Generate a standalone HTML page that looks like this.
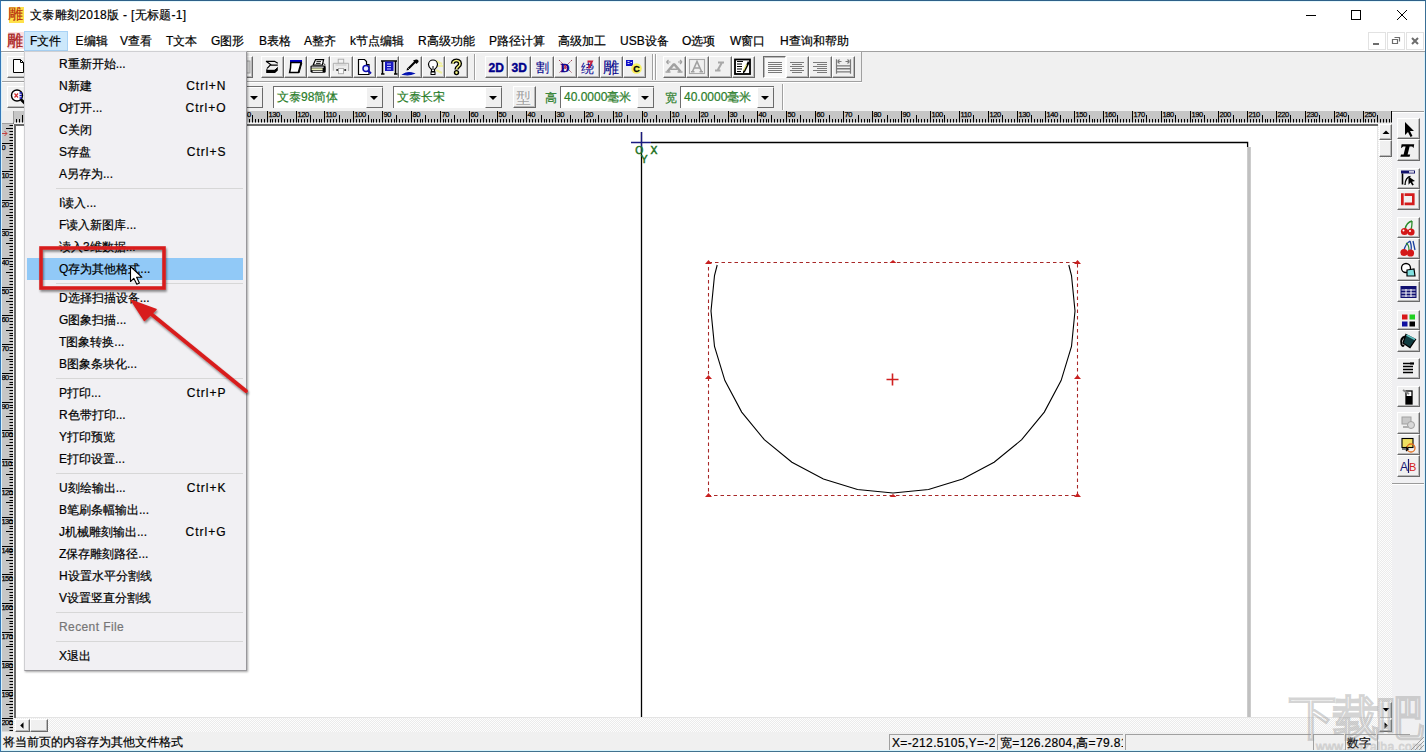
<!DOCTYPE html>
<html><head><meta charset="utf-8">
<style>

*{box-sizing:border-box}
html,body{margin:0;padding:0}
body{width:1426px;height:752px;overflow:hidden;position:relative;background:#f0f0f0;font-family:"Liberation Sans",sans-serif;font-size:12px;color:#000;-webkit-text-stroke-width:0.2px}
.a{position:absolute}
svg{position:absolute;overflow:visible}


.sb{position:absolute;background:#f0f0f0;border-top:1px solid #fff;border-left:1px solid #fff;border-right:1px solid #6a6a6a;border-bottom:1px solid #6a6a6a;box-shadow:inset -1px -1px 0 #b9b9b9}
.trk{position:absolute;background-color:#fdfdfd;background-image:linear-gradient(45deg,#ebebeb 25%,transparent 25%,transparent 75%,#ebebeb 75%),linear-gradient(45deg,#ebebeb 25%,transparent 25%,transparent 75%,#ebebeb 75%);background-size:2px 2px;background-position:0 0,1px 1px}


.tb{position:absolute;width:23px;height:22px;background:#f0f0f0;border-top:1px solid #fff;border-left:1px solid #fff;border-right:1px solid #6a6a6a;border-bottom:1px solid #6a6a6a;box-shadow:inset -1px -1px 0 #b9b9b9}
.tb svg{left:-1px;top:-1px}
.vsep{position:absolute;width:2px;border-left:1px solid #a0a0a0;border-right:1px solid #fff}
.cb{position:absolute;height:22px;background:#fff;border-top:1px solid #6e6e6e;border-left:1px solid #6e6e6e;white-space:nowrap;overflow:hidden}
.dd{position:absolute;right:0;top:0;width:17px;height:21px;background:#f0f0f0;border-top:1px solid #fff;border-left:1px solid #fff;border-right:1px solid #6a6a6a;border-bottom:1px solid #6a6a6a}
.dd:after{content:"";position:absolute;left:3px;top:8px;border-left:4px solid transparent;border-right:4px solid transparent;border-top:4px solid #000}
.gt{position:absolute;color:#2a7d2a;font-size:12px;line-height:16px;white-space:nowrap}


#menu{position:absolute;left:24px;top:51px;width:223px;height:620px;background:#f1f0f3;border:1px solid #cfcfd2;border-right-color:#98979b;border-bottom-color:#98979b;box-shadow:1px 1px 2px rgba(0,0,0,.35)}
.it{position:absolute;left:34px;height:22px;line-height:22px;white-space:nowrap}
.sc{position:absolute;right:19.5px;height:22px;line-height:22px;white-space:nowrap;letter-spacing:1px}
.sep{position:absolute;left:31px;width:187px;height:1px;background:#d7d7d7}
.hl{position:absolute;left:2px;width:216px;height:22px;background:#91c9f7}

</style></head><body>

<div class="a" style="left:0;top:0;width:1426px;height:31px;background:#fff"></div>
<div class="a" style="left:0;top:31px;width:1426px;height:20px;background:#fff"></div>
<div class="a" style="left:0;top:51px;width:1426px;height:1px;background:#a0a0a0"></div>


<div class="a" style="left:9px;top:7px;width:15px;height:16px;background:#ffe14a"></div>
<div class="a" style="left:8px;top:5px;font-size:15px;line-height:18px;color:#b83010">雕</div>
<div class="a" style="left:30px;top:7px;font-size:12px;line-height:16px;color:#000;letter-spacing:0.3px">文泰雕刻2018版 - [无标题-1]</div>
<svg style="left:0;top:0" width="1426" height="52">
 <line x1="1306" y1="15.5" x2="1316" y2="15.5" stroke="#000" stroke-width="1"/>
 <rect x="1351.5" y="10.5" width="9" height="9" fill="none" stroke="#000" stroke-width="1"/>
 <path d="M1397 10 L1407 20 M1407 10 L1397 20" stroke="#000" stroke-width="1"/>
 <rect x="1368.5" y="32.5" width="17" height="17" fill="none" stroke="#e2e2e2"/>
 <rect x="1387.5" y="32.5" width="17" height="17" fill="none" stroke="#e2e2e2"/>
 <rect x="1406.5" y="32.5" width="17" height="17" fill="none" stroke="#e2e2e2"/>
 <rect x="1373" y="43" width="6" height="2" fill="#6d6d6d"/>
 <path d="M1392.5 39.5h5v4h-5z M1394.5 37.5h5v4" fill="none" stroke="#6d6d6d" stroke-width="1.2"/>
 <path d="M1412 38 L1418 44 M1418 38 L1412 44" stroke="#6d6d6d" stroke-width="2"/>
</svg>
<div class="a" style="left:8px;top:32px;width:16px;height:17px;background:#fbe0e0"></div><div class="a" style="left:7px;top:32px;font-size:16px;line-height:18px;color:#c01c1c;-webkit-text-stroke:0.3px #901818">雕</div>
<div class="a" style="left:24px;top:31px;width:44px;height:20px;background:#cce8fb;border:1px solid #a8d2f5"></div>

<div class="a" style="left:30px;top:33px;line-height:16px;white-space:nowrap">F文件</div>
<div class="a" style="left:75.5px;top:33px;line-height:16px;white-space:nowrap">E编辑</div>
<div class="a" style="left:120px;top:33px;line-height:16px;white-space:nowrap">V查看</div>
<div class="a" style="left:166px;top:33px;line-height:16px;white-space:nowrap">T文本</div>
<div class="a" style="left:211px;top:33px;line-height:16px;white-space:nowrap">G图形</div>
<div class="a" style="left:259px;top:33px;line-height:16px;white-space:nowrap">B表格</div>
<div class="a" style="left:304px;top:33px;line-height:16px;white-space:nowrap">A整齐</div>
<div class="a" style="left:350px;top:33px;line-height:16px;white-space:nowrap">k节点编辑</div>
<div class="a" style="left:418px;top:33px;line-height:16px;white-space:nowrap">R高级功能</div>
<div class="a" style="left:489px;top:33px;line-height:16px;white-space:nowrap">P路径计算</div>
<div class="a" style="left:558px;top:33px;line-height:16px;white-space:nowrap">高级加工</div>
<div class="a" style="left:620px;top:33px;line-height:16px;white-space:nowrap">USB设备</div>
<div class="a" style="left:682px;top:33px;line-height:16px;white-space:nowrap">O选项</div>
<div class="a" style="left:730px;top:33px;line-height:16px;white-space:nowrap">W窗口</div>
<div class="a" style="left:780px;top:33px;line-height:16px;white-space:nowrap">H查询和帮助</div>

<div class="a" style="left:1px;top:111px;width:13px;height:13px;background:#ececec;border-right:1px solid #777;border-bottom:1px solid #777"></div>
<div class="a" style="left:14px;top:124px;width:1364px;height:595px;background:#fff;border-top:2px solid #6a6a6a;border-left:2px solid #6a6a6a"></div>

<svg style="left:0;top:0" width="1426" height="752" viewBox="0 0 1426 752">
<rect x="13.5" y="111" width="1378" height="11.5" fill="#c6c6c6"/><rect x="14" y="122.5" width="1364" height="1.5" fill="#f4f4f4"/>
<path d="M16.5 119V122.5M19.5 119V122.5M22.5 115V122.5M24.5 119V122.5M27.5 119V122.5M30.5 119V122.5M33.5 119V122.5M36.5 111V122.5M39.5 119V122.5M42.5 119V122.5M45.5 119V122.5M47.5 119V122.5M50.5 115V122.5M53.5 119V122.5M56.5 119V122.5M59.5 119V122.5M62.5 119V122.5M65.5 111V122.5M68.5 119V122.5M71.5 119V122.5M73.5 119V122.5M76.5 119V122.5M79.5 115V122.5M82.5 119V122.5M85.5 119V122.5M88.5 119V122.5M91.5 119V122.5M94.5 111V122.5M97.5 119V122.5M99.5 119V122.5M102.5 119V122.5M105.5 119V122.5M108.5 115V122.5M111.5 119V122.5M114.5 119V122.5M117.5 119V122.5M120.5 119V122.5M122.5 111V122.5M125.5 119V122.5M128.5 119V122.5M131.5 119V122.5M134.5 119V122.5M137.5 115V122.5M140.5 119V122.5M143.5 119V122.5M146.5 119V122.5M148.5 119V122.5M151.5 111V122.5M154.5 119V122.5M157.5 119V122.5M160.5 119V122.5M163.5 119V122.5M166.5 115V122.5M169.5 119V122.5M172.5 119V122.5M174.5 119V122.5M177.5 119V122.5M180.5 111V122.5M183.5 119V122.5M186.5 119V122.5M189.5 119V122.5M192.5 119V122.5M195.5 115V122.5M197.5 119V122.5M200.5 119V122.5M203.5 119V122.5M206.5 119V122.5M209.5 111V122.5M212.5 119V122.5M215.5 119V122.5M218.5 119V122.5M221.5 119V122.5M223.5 115V122.5M226.5 119V122.5M229.5 119V122.5M232.5 119V122.5M235.5 119V122.5M238.5 111V122.5M241.5 119V122.5M244.5 119V122.5M246.5 119V122.5M249.5 119V122.5M252.5 115V122.5M255.5 119V122.5M258.5 119V122.5M261.5 119V122.5M264.5 119V122.5M267.5 111V122.5M270.5 119V122.5M272.5 119V122.5M275.5 119V122.5M278.5 119V122.5M281.5 115V122.5M284.5 119V122.5M287.5 119V122.5M290.5 119V122.5M293.5 119V122.5M296.5 111V122.5M298.5 119V122.5M301.5 119V122.5M304.5 119V122.5M307.5 119V122.5M310.5 115V122.5M313.5 119V122.5M316.5 119V122.5M319.5 119V122.5M321.5 119V122.5M324.5 111V122.5M327.5 119V122.5M330.5 119V122.5M333.5 119V122.5M336.5 119V122.5M339.5 115V122.5M342.5 119V122.5M345.5 119V122.5M347.5 119V122.5M350.5 119V122.5M353.5 111V122.5M356.5 119V122.5M359.5 119V122.5M362.5 119V122.5M365.5 119V122.5M368.5 115V122.5M371.5 119V122.5M373.5 119V122.5M376.5 119V122.5M379.5 119V122.5M382.5 111V122.5M385.5 119V122.5M388.5 119V122.5M391.5 119V122.5M394.5 119V122.5M396.5 115V122.5M399.5 119V122.5M402.5 119V122.5M405.5 119V122.5M408.5 119V122.5M411.5 111V122.5M414.5 119V122.5M417.5 119V122.5M420.5 119V122.5M422.5 119V122.5M425.5 115V122.5M428.5 119V122.5M431.5 119V122.5M434.5 119V122.5M437.5 119V122.5M440.5 111V122.5M443.5 119V122.5M445.5 119V122.5M448.5 119V122.5M451.5 119V122.5M454.5 115V122.5M457.5 119V122.5M460.5 119V122.5M463.5 119V122.5M466.5 119V122.5M469.5 111V122.5M471.5 119V122.5M474.5 119V122.5M477.5 119V122.5M480.5 119V122.5M483.5 115V122.5M486.5 119V122.5M489.5 119V122.5M492.5 119V122.5M495.5 119V122.5M497.5 111V122.5M500.5 119V122.5M503.5 119V122.5M506.5 119V122.5M509.5 119V122.5M512.5 115V122.5M515.5 119V122.5M518.5 119V122.5M520.5 119V122.5M523.5 119V122.5M526.5 111V122.5M529.5 119V122.5M532.5 119V122.5M535.5 119V122.5M538.5 119V122.5M541.5 115V122.5M544.5 119V122.5M546.5 119V122.5M549.5 119V122.5M552.5 119V122.5M555.5 111V122.5M558.5 119V122.5M561.5 119V122.5M564.5 119V122.5M567.5 119V122.5M570.5 115V122.5M572.5 119V122.5M575.5 119V122.5M578.5 119V122.5M581.5 119V122.5M584.5 111V122.5M587.5 119V122.5M590.5 119V122.5M593.5 119V122.5M595.5 119V122.5M598.5 115V122.5M601.5 119V122.5M604.5 119V122.5M607.5 119V122.5M610.5 119V122.5M613.5 111V122.5M616.5 119V122.5M619.5 119V122.5M621.5 119V122.5M624.5 119V122.5M627.5 115V122.5M630.5 119V122.5M633.5 119V122.5M636.5 119V122.5M639.5 119V122.5M642.5 111V122.5M644.5 119V122.5M647.5 119V122.5M650.5 119V122.5M653.5 119V122.5M656.5 115V122.5M659.5 119V122.5M662.5 119V122.5M665.5 119V122.5M668.5 119V122.5M670.5 111V122.5M673.5 119V122.5M676.5 119V122.5M679.5 119V122.5M682.5 119V122.5M685.5 115V122.5M688.5 119V122.5M691.5 119V122.5M694.5 119V122.5M696.5 119V122.5M699.5 111V122.5M702.5 119V122.5M705.5 119V122.5M708.5 119V122.5M711.5 119V122.5M714.5 115V122.5M717.5 119V122.5M719.5 119V122.5M722.5 119V122.5M725.5 119V122.5M728.5 111V122.5M731.5 119V122.5M734.5 119V122.5M737.5 119V122.5M740.5 119V122.5M743.5 115V122.5M745.5 119V122.5M748.5 119V122.5M751.5 119V122.5M754.5 119V122.5M757.5 111V122.5M760.5 119V122.5M763.5 119V122.5M766.5 119V122.5M768.5 119V122.5M771.5 115V122.5M774.5 119V122.5M777.5 119V122.5M780.5 119V122.5M783.5 119V122.5M786.5 111V122.5M789.5 119V122.5M792.5 119V122.5M794.5 119V122.5M797.5 119V122.5M800.5 115V122.5M803.5 119V122.5M806.5 119V122.5M809.5 119V122.5M812.5 119V122.5M815.5 111V122.5M818.5 119V122.5M820.5 119V122.5M823.5 119V122.5M826.5 119V122.5M829.5 115V122.5M832.5 119V122.5M835.5 119V122.5M838.5 119V122.5M841.5 119V122.5M843.5 111V122.5M846.5 119V122.5M849.5 119V122.5M852.5 119V122.5M855.5 119V122.5M858.5 115V122.5M861.5 119V122.5M864.5 119V122.5M867.5 119V122.5M869.5 119V122.5M872.5 111V122.5M875.5 119V122.5M878.5 119V122.5M881.5 119V122.5M884.5 119V122.5M887.5 115V122.5M890.5 119V122.5M893.5 119V122.5M895.5 119V122.5M898.5 119V122.5M901.5 111V122.5M904.5 119V122.5M907.5 119V122.5M910.5 119V122.5M913.5 119V122.5M916.5 115V122.5M918.5 119V122.5M921.5 119V122.5M924.5 119V122.5M927.5 119V122.5M930.5 111V122.5M933.5 119V122.5M936.5 119V122.5M939.5 119V122.5M942.5 119V122.5M944.5 115V122.5M947.5 119V122.5M950.5 119V122.5M953.5 119V122.5M956.5 119V122.5M959.5 111V122.5M962.5 119V122.5M965.5 119V122.5M967.5 119V122.5M970.5 119V122.5M973.5 115V122.5M976.5 119V122.5M979.5 119V122.5M982.5 119V122.5M985.5 119V122.5M988.5 111V122.5M991.5 119V122.5M993.5 119V122.5M996.5 119V122.5M999.5 119V122.5M1002.5 115V122.5M1005.5 119V122.5M1008.5 119V122.5M1011.5 119V122.5M1014.5 119V122.5M1017.5 111V122.5M1019.5 119V122.5M1022.5 119V122.5M1025.5 119V122.5M1028.5 119V122.5M1031.5 115V122.5M1034.5 119V122.5M1037.5 119V122.5M1040.5 119V122.5M1042.5 119V122.5M1045.5 111V122.5M1048.5 119V122.5M1051.5 119V122.5M1054.5 119V122.5M1057.5 119V122.5M1060.5 115V122.5M1063.5 119V122.5M1066.5 119V122.5M1068.5 119V122.5M1071.5 119V122.5M1074.5 111V122.5M1077.5 119V122.5M1080.5 119V122.5M1083.5 119V122.5M1086.5 119V122.5M1089.5 115V122.5M1092.5 119V122.5M1094.5 119V122.5M1097.5 119V122.5M1100.5 119V122.5M1103.5 111V122.5M1106.5 119V122.5M1109.5 119V122.5M1112.5 119V122.5M1115.5 119V122.5M1117.5 115V122.5M1120.5 119V122.5M1123.5 119V122.5M1126.5 119V122.5M1129.5 119V122.5M1132.5 111V122.5M1135.5 119V122.5M1138.5 119V122.5M1141.5 119V122.5M1143.5 119V122.5M1146.5 115V122.5M1149.5 119V122.5M1152.5 119V122.5M1155.5 119V122.5M1158.5 119V122.5M1161.5 111V122.5M1164.5 119V122.5M1166.5 119V122.5M1169.5 119V122.5M1172.5 119V122.5M1175.5 115V122.5M1178.5 119V122.5M1181.5 119V122.5M1184.5 119V122.5M1187.5 119V122.5M1190.5 111V122.5M1192.5 119V122.5M1195.5 119V122.5M1198.5 119V122.5M1201.5 119V122.5M1204.5 115V122.5M1207.5 119V122.5M1210.5 119V122.5M1213.5 119V122.5M1216.5 119V122.5M1218.5 111V122.5M1221.5 119V122.5M1224.5 119V122.5M1227.5 119V122.5M1230.5 119V122.5M1233.5 115V122.5M1236.5 119V122.5M1239.5 119V122.5M1241.5 119V122.5M1244.5 119V122.5M1247.5 111V122.5M1250.5 119V122.5M1253.5 119V122.5M1256.5 119V122.5M1259.5 119V122.5M1262.5 115V122.5M1265.5 119V122.5M1267.5 119V122.5M1270.5 119V122.5M1273.5 119V122.5M1276.5 111V122.5M1279.5 119V122.5M1282.5 119V122.5M1285.5 119V122.5M1288.5 119V122.5M1290.5 115V122.5M1293.5 119V122.5M1296.5 119V122.5M1299.5 119V122.5M1302.5 119V122.5M1305.5 111V122.5M1308.5 119V122.5M1311.5 119V122.5M1314.5 119V122.5M1316.5 119V122.5M1319.5 115V122.5M1322.5 119V122.5M1325.5 119V122.5M1328.5 119V122.5M1331.5 119V122.5M1334.5 111V122.5M1337.5 119V122.5M1340.5 119V122.5M1342.5 119V122.5M1345.5 119V122.5M1348.5 115V122.5M1351.5 119V122.5M1354.5 119V122.5M1357.5 119V122.5M1360.5 119V122.5M1363.5 111V122.5M1365.5 119V122.5M1368.5 119V122.5M1371.5 119V122.5M1374.5 119V122.5M1377.5 115V122.5M1380.5 119V122.5M1383.5 119V122.5M1386.5 119V122.5M1389.5 119V122.5M1391.5 111V122.5" stroke="#000" stroke-width="1"/>
<g font-family="Liberation Sans" font-size="7.5" fill="#000" stroke="#000" stroke-width="0.25" letter-spacing="-0.4"><text x="37.5" y="117">210</text><text x="66.5" y="117">200</text><text x="95.5" y="117">190</text><text x="123.5" y="117">180</text><text x="152.5" y="117">170</text><text x="181.5" y="117">160</text><text x="210.5" y="117">150</text><text x="239.5" y="117">140</text><text x="268.5" y="117">130</text><text x="297.5" y="117">120</text><text x="325.5" y="117">110</text><text x="354.5" y="117">100</text><text x="383.5" y="117">90</text><text x="412.5" y="117">80</text><text x="441.5" y="117">70</text><text x="470.5" y="117">60</text><text x="498.5" y="117">50</text><text x="527.5" y="117">40</text><text x="556.5" y="117">30</text><text x="585.5" y="117">20</text><text x="614.5" y="117">10</text><text x="643.5" y="117">0</text><text x="671.5" y="117">10</text><text x="700.5" y="117">20</text><text x="729.5" y="117">30</text><text x="758.5" y="117">40</text><text x="787.5" y="117">50</text><text x="816.5" y="117">60</text><text x="844.5" y="117">70</text><text x="873.5" y="117">80</text><text x="902.5" y="117">90</text><text x="931.5" y="117">100</text><text x="960.5" y="117">110</text><text x="989.5" y="117">120</text><text x="1018.5" y="117">130</text><text x="1046.5" y="117">140</text><text x="1075.5" y="117">150</text><text x="1104.5" y="117">160</text><text x="1133.5" y="117">170</text><text x="1162.5" y="117">180</text><text x="1191.5" y="117">190</text><text x="1219.5" y="117">200</text><text x="1248.5" y="117">210</text><text x="1277.5" y="117">220</text><text x="1306.5" y="117">230</text><text x="1335.5" y="117">240</text><text x="1364.5" y="117">250</text></g>
<rect x="1.5" y="123.5" width="11.5" height="608" fill="#c6c6c6"/>
<path d="M9.5 125.5H13M6 128.5H13M9.5 131.5H13M9.5 134.5H13M9.5 137.5H13M9.5 140.5H13M2 143.5H13M9.5 145.5H13M9.5 148.5H13M9.5 151.5H13M9.5 154.5H13M6 157.5H13M9.5 160.5H13M9.5 163.5H13M9.5 166.5H13M9.5 169.5H13M2 171.5H13M9.5 174.5H13M9.5 177.5H13M9.5 180.5H13M9.5 183.5H13M6 186.5H13M9.5 189.5H13M9.5 192.5H13M9.5 194.5H13M9.5 197.5H13M2 200.5H13M9.5 203.5H13M9.5 206.5H13M9.5 209.5H13M9.5 212.5H13M6 215.5H13M9.5 217.5H13M9.5 220.5H13M9.5 223.5H13M9.5 226.5H13M2 229.5H13M9.5 232.5H13M9.5 235.5H13M9.5 238.5H13M9.5 240.5H13M6 243.5H13M9.5 246.5H13M9.5 249.5H13M9.5 252.5H13M9.5 255.5H13M2 258.5H13M9.5 261.5H13M9.5 264.5H13M9.5 266.5H13M9.5 269.5H13M6 272.5H13M9.5 275.5H13M9.5 278.5H13M9.5 281.5H13M9.5 284.5H13M2 287.5H13M9.5 289.5H13M9.5 292.5H13M9.5 295.5H13M9.5 298.5H13M6 301.5H13M9.5 304.5H13M9.5 307.5H13M9.5 310.5H13M9.5 312.5H13M2 315.5H13M9.5 318.5H13M9.5 321.5H13M9.5 324.5H13M9.5 327.5H13M6 330.5H13M9.5 333.5H13M9.5 335.5H13M9.5 338.5H13M9.5 341.5H13M2 344.5H13M9.5 347.5H13M9.5 350.5H13M9.5 353.5H13M9.5 356.5H13M6 359.5H13M9.5 361.5H13M9.5 364.5H13M9.5 367.5H13M9.5 370.5H13M2 373.5H13M9.5 376.5H13M9.5 379.5H13M9.5 382.5H13M9.5 384.5H13M6 387.5H13M9.5 390.5H13M9.5 393.5H13M9.5 396.5H13M9.5 399.5H13M2 402.5H13M9.5 405.5H13M9.5 407.5H13M9.5 410.5H13M9.5 413.5H13M6 416.5H13M9.5 419.5H13M9.5 422.5H13M9.5 425.5H13M9.5 428.5H13M2 430.5H13M9.5 433.5H13M9.5 436.5H13M9.5 439.5H13M9.5 442.5H13M6 445.5H13M9.5 448.5H13M9.5 451.5H13M9.5 454.5H13M9.5 456.5H13M2 459.5H13M9.5 462.5H13M9.5 465.5H13M9.5 468.5H13M9.5 471.5H13M6 474.5H13M9.5 477.5H13M9.5 479.5H13M9.5 482.5H13M9.5 485.5H13M2 488.5H13M9.5 491.5H13M9.5 494.5H13M9.5 497.5H13M9.5 500.5H13M6 502.5H13M9.5 505.5H13M9.5 508.5H13M9.5 511.5H13M9.5 514.5H13M2 517.5H13M9.5 520.5H13M9.5 523.5H13M9.5 526.5H13M9.5 528.5H13M6 531.5H13M9.5 534.5H13M9.5 537.5H13M9.5 540.5H13M9.5 543.5H13M2 546.5H13M9.5 549.5H13M9.5 551.5H13M9.5 554.5H13M9.5 557.5H13M6 560.5H13M9.5 563.5H13M9.5 566.5H13M9.5 569.5H13M9.5 572.5H13M2 574.5H13M9.5 577.5H13M9.5 580.5H13M9.5 583.5H13M9.5 586.5H13M6 589.5H13M9.5 592.5H13M9.5 595.5H13M9.5 597.5H13M9.5 600.5H13M2 603.5H13M9.5 606.5H13M9.5 609.5H13M9.5 612.5H13M9.5 615.5H13M6 618.5H13M9.5 621.5H13M9.5 623.5H13M9.5 626.5H13M9.5 629.5H13M2 632.5H13M9.5 635.5H13M9.5 638.5H13M9.5 641.5H13M9.5 644.5H13M6 646.5H13M9.5 649.5H13M9.5 652.5H13M9.5 655.5H13M9.5 658.5H13M2 661.5H13M9.5 664.5H13M9.5 667.5H13M9.5 669.5H13M9.5 672.5H13M6 675.5H13M9.5 678.5H13M9.5 681.5H13M9.5 684.5H13M9.5 687.5H13M2 690.5H13M9.5 692.5H13M9.5 695.5H13M9.5 698.5H13M9.5 701.5H13M6 704.5H13M9.5 707.5H13M9.5 710.5H13M9.5 713.5H13M9.5 716.5H13M2 718.5H13M9.5 721.5H13M9.5 724.5H13M9.5 727.5H13M9.5 730.5H13" stroke="#000" stroke-width="1"/>
<g font-family="Liberation Sans" font-size="7.5" fill="#000" stroke="#000" stroke-width="0.25" letter-spacing="-0.6"><text x="1.5" y="149.5">0</text><text x="1.5" y="177.5">10</text><text x="1.5" y="206.5">20</text><text x="1.5" y="235.5">30</text><text x="1.5" y="264.5">40</text><text x="1.5" y="293.5">50</text><text x="1.5" y="321.5">60</text><text x="1.5" y="350.5">70</text><text x="1.5" y="379.5">80</text><text x="1.5" y="408.5">90</text><text x="1.5" y="436.5">100</text><text x="1.5" y="465.5">110</text><text x="1.5" y="494.5">120</text><text x="1.5" y="523.5">130</text><text x="1.5" y="552.5">140</text><text x="1.5" y="580.5">150</text><text x="1.5" y="609.5">160</text><text x="1.5" y="638.5">170</text><text x="1.5" y="667.5">180</text><text x="1.5" y="696.5">190</text><text x="1.5" y="724.5">200</text></g>
<path d="M1 133.5h6M4.5 131l2.5 2.5-2.5 2.5" stroke="#c04040" fill="none" stroke-width="1"/>
</svg>

<svg style="left:0;top:0" width="1426" height="752" viewBox="0 0 1426 752">
 <path d="M641.5 132V718" stroke="#000" stroke-width="1.3"/>
 <rect x="1247.2" y="147" width="3.6" height="570" fill="#c0c0c0"/>
 <path d="M651 142.5H1247.6V147" stroke="#000" stroke-width="1.3" fill="none"/>
 <path d="M631 142.5H651M641.5 132V152" stroke="#1a1a80" stroke-width="1.3"/>
 <g font-family="Liberation Sans" font-size="10.3" fill="#267326" stroke="#267326" stroke-width="0.5"><text x="635.3" y="153.8">O</text><text x="650.6" y="153.8">X</text><text x="640.8" y="163.4">Y</text></g>
 <path d="M717.2 265.0 L714.5 275.5 L711.0 311.0 L714.5 346.5 L724.9 380.6 L741.7 412.1 L764.3 439.7 L791.9 462.3 L823.4 479.1 L857.5 489.5 L893.0 493.0 L928.5 489.5 L962.6 479.1 L994.1 462.3 L1021.7 439.7 L1044.3 412.1 L1061.1 380.6 L1071.5 346.5 L1075.0 311.0 L1071.5 275.5 L1068.8 265.0" fill="none" stroke="#000" stroke-width="1.1"/>
 <rect x="708.5" y="262.5" width="369" height="233" fill="none" stroke="#a82828" stroke-width="1.1" stroke-dasharray="3.5 3"/>
 <g fill="#c82020" transform="translate(0,-1)">
  <path d="M705 265l3.5-4 3.5 4z"/><path d="M889.5 264l3.5-3 3.5 3z"/><path d="M1074 265l3.5-4 3.5 4z"/>
  <path d="M705 380l3.5-4 3.5 4z"/><path d="M1074 380l3.5-4 3.5 4z"/>
  <path d="M705 498l3.5-4 3.5 4z"/><path d="M889.5 498l3.5-3 3.5 3z"/><path d="M1074 498l3.5-4 3.5 4z"/>
 </g>
 <path d="M892.5 373.5V385.5M886.5 379.5H898.5" stroke="#d02020" stroke-width="1.6"/>
</svg>


<div class="trk" style="left:1378px;top:124px;width:14px;height:595px"></div>
<div class="sb" style="left:1379px;top:124px;width:13px;height:16px"></div>
<div class="sb" style="left:1379px;top:140px;width:13px;height:17px"></div>
<div class="sb" style="left:1379px;top:702px;width:13px;height:17px"></div>
<div class="trk" style="left:14px;top:718px;width:1378px;height:14px"></div>
<div class="a" style="left:16px;top:717px;width:1361px;height:1px;background:#e4e4e4"></div>
<div class="a" style="left:1377px;top:126px;width:1px;height:592px;background:#e4e4e4"></div>
<div class="sb" style="left:15px;top:719px;width:15px;height:13px"></div>
<div class="sb" style="left:30px;top:719px;width:18px;height:13px"></div>
<div class="sb" style="left:1379px;top:719px;width:13px;height:13px"></div>
<svg style="left:0;top:0" width="1426" height="752">
 <path d="M1382.5 134h7l-3.5-3.5z" fill="#000"/>
 <path d="M1382.5 708h7l-3.5 3.5z" fill="#000"/>
 <path d="M1384.5 722.3v6.4l3.3-3.2z" fill="#000"/>
 <path d="M23.5 722.3v6.4l-3.3-3.2z" fill="#000"/>
</svg>


<div class="a" style="left:1px;top:52px;width:861px;height:30px;border-bottom:1px solid #a0a0a0;border-right:1px solid #a0a0a0;box-shadow:inset 1px 1px 0 #fff"></div>
<div class="a" style="left:1px;top:82px;width:861px;height:1px;background:#fff"></div>
<div class="vsep" style="left:474px;top:54px;height:26px"></div>
<div class="vsep" style="left:652px;top:54px;height:26px"></div>
<div class="vsep" style="left:655px;top:54px;height:26px"></div>
<div class="vsep" style="left:782px;top:84px;height:26px"></div>

<div class="tb" style="left:7px;top:56px;"><svg width="23" height="22" viewBox="0 0 23 22"><path d="M6.5 3.5h7l3 3v10h-10z" fill="#fff" stroke="#000"/><path d="M13.5 3.5v3h3" fill="none" stroke="#000"/></svg></div>
<div class="tb" style="left:30px;top:56px;"><svg width="23" height="22" viewBox="0 0 23 22"></svg></div>
<div class="tb" style="left:53px;top:56px;"><svg width="23" height="22" viewBox="0 0 23 22"></svg></div>
<div class="tb" style="left:76px;top:56px;"><svg width="23" height="22" viewBox="0 0 23 22"></svg></div>
<div class="tb" style="left:99px;top:56px;"><svg width="23" height="22" viewBox="0 0 23 22"></svg></div>
<div class="tb" style="left:122px;top:56px;"><svg width="23" height="22" viewBox="0 0 23 22"></svg></div>
<div class="tb" style="left:145px;top:56px;"><svg width="23" height="22" viewBox="0 0 23 22"></svg></div>
<div class="tb" style="left:168px;top:56px;"><svg width="23" height="22" viewBox="0 0 23 22"></svg></div>
<div class="tb" style="left:191px;top:56px;"><svg width="23" height="22" viewBox="0 0 23 22"></svg></div>
<div class="tb" style="left:214px;top:56px;"><svg width="23" height="22" viewBox="0 0 23 22"></svg></div>
<div class="tb" style="left:230px;top:56px;"><svg width="23" height="22" viewBox="0 0 23 22"><rect x="14" y="5" width="6" height="12" fill="#d8d8d8" stroke="#a0a0a0"/></svg></div>
<div class="tb" style="left:261px;top:56px;"><svg width="23" height="22" viewBox="0 0 23 22"><path d="M5 5.3H13.5L16.8 7.3M5 5.3L9.7 8.6L5.9 12.6M9.7 9.2H16.8" fill="none" stroke="#000" stroke-width="1.2"/><path d="M5.2 13.2H14L16.8 10.8V14.6L14 16.9H5.2z" fill="#000"/><path d="M6.5 13.2H13.5L15.8 11.3" stroke="#fff" stroke-width="1" fill="none"/></svg></div>
<div class="tb" style="left:284px;top:56px;"><svg width="23" height="22" viewBox="0 0 23 22"><rect x="6" y="4" width="12" height="2.6" fill="#0000c8"/><path d="M6.8 6.5H17.2L14.3 16.6H5.6L6.5 12z" fill="#fff" stroke="#000" stroke-width="1.5"/><path d="M17.8 7L15 17" stroke="#000" stroke-width="1"/></svg></div>
<div class="tb" style="left:307px;top:56px;"><svg width="23" height="22" viewBox="0 0 23 22"><path d="M3.5 10.5Q3.5 9.4 5 9.4H17.5Q18.7 9.4 18.7 11V15.5Q18.7 16.7 17.3 16.7H5Q3.5 16.7 3.5 15.3z" fill="#000"/><rect x="4.6" y="10.6" width="12" height="1.1" fill="#fff"/><rect x="4.6" y="12.3" width="11" height="1.9" fill="#eef4c0"/><rect x="5.6" y="14.8" width="10" height="1.1" fill="#fff"/><path d="M8.6 3.6H16.6L15.4 9H6.2z" fill="#fff" stroke="#000" stroke-width="1.2"/><path d="M9.5 5.6H14M9 7.4H13.5" stroke="#000" stroke-width="0.9"/><path d="M16.5 7.5l2 1.5M17 12l1.5 1M16.5 15.5l1.5-1" stroke="#000" stroke-width="0.8"/></svg></div>
<div class="tb" style="left:330px;top:56px;"><svg width="23" height="22" viewBox="0 0 23 22"><rect x="8.2" y="3.2" width="5.5" height="4.1" fill="#f4f4f4" stroke="#a8a8a8" stroke-width="0.9"/><path d="M3.3 14.8V7.3H18.6V15" fill="#ececec" stroke="#a8a8a8" stroke-width="0.9"/><path d="M5.5 9h11" stroke="#c8c8c8"/><rect x="8.5" y="12.5" width="5" height="5.2" fill="#fafafa" stroke="#a8a8a8" stroke-width="0.9"/><rect x="6.3" y="13.2" width="1.8" height="1.6" fill="#111"/><rect x="14.3" y="13.2" width="1.8" height="1.6" fill="#111"/></svg></div>
<div class="tb" style="left:353px;top:56px;"><svg width="23" height="22" viewBox="0 0 23 22"><path d="M5.5 3.5h6l2 2v3h2.5v10h-10.5z" fill="#fff" stroke="#000" stroke-width="1.2"/><circle cx="13" cy="12.5" r="3" fill="#e8ecff" stroke="#1010b0" stroke-width="1.5"/><path d="M15 14.5l3 3" stroke="#1010b0" stroke-width="2"/></svg></div>
<div class="tb" style="left:376px;top:56px;"><svg width="23" height="22" viewBox="0 0 23 22"><path d="M5 5h16M6.5 5v13M19.5 5v13M5 18h3.5M18 18h3.5" stroke="#000" stroke-width="1.5"/><rect x="9" y="5.5" width="8.5" height="9.5" fill="#1818c0"/><path d="M11 8h4M11 10.5h4M11 13h4" stroke="#c8c8ff" stroke-width="1"/></svg></div>
<div class="tb" style="left:399px;top:56px;"><svg width="23" height="22" viewBox="0 0 23 22"><path d="M17 3.5a2 2 0 0 1 2.5 2.5l-2 2 -1-1 -7 7 -2 .5 .5-2 7-7 -1-1z" fill="#000"/><path d="M9.5 12.5l2 2" stroke="#fff"/><path d="M4 18.5c3-2 8-2 11-1-3 1.5-8 1.5-11 1z" fill="#0010b0" stroke="#0010b0" stroke-width="1.2"/></svg></div>
<div class="tb" style="left:422px;top:56px;"><svg width="23" height="22" viewBox="0 0 23 22"><path d="M14 5l6 3M14 10l7 0M14 14l6 3" stroke="#f0f0a0" stroke-width="2"/><path d="M9.5 15.5v-2c-2-1.5-3-3-3-5a4.5 4.5 0 0 1 9 0c0 2-1 3.5-3 5v2z" fill="#fff" stroke="#000" stroke-width="1.2"/><rect x="9" y="16" width="4" height="2.5" fill="#fff" stroke="#000"/><path d="M11 10v4" stroke="#000"/></svg></div>
<div class="tb" style="left:445px;top:56px;"><svg width="23" height="22" viewBox="0 0 23 22"><path d="M7.8 7.6a3.6 3.2 0 1 1 5.6 2.8c-1.4 .9-1.9 1.4-1.9 3.2" fill="none" stroke="#000" stroke-width="4.2"/><path d="M7.8 7.6a3.6 3.2 0 1 1 5.6 2.8c-1.4 .9-1.9 1.4-1.9 3.2" fill="none" stroke="#f4f480" stroke-width="1.5"/><circle cx="11.5" cy="16.6" r="2" fill="#f4f480" stroke="#000" stroke-width="1.4"/></svg></div>
<div class="tb" style="left:485px;top:56px;"><svg width="23" height="22" viewBox="0 0 23 22"><text x="3.5" y="15.5" font-family="Liberation Sans" font-weight="bold" font-size="12" fill="#00008a" stroke="#00008a" stroke-width="0.4">2D</text></svg></div>
<div class="tb" style="left:508px;top:56px;"><svg width="23" height="22" viewBox="0 0 23 22"><text x="3.5" y="15.5" font-family="Liberation Sans" font-weight="bold" font-size="12" fill="#00008a" stroke="#00008a" stroke-width="0.4">3D</text></svg></div>
<div class="tb" style="left:531px;top:56px;"><svg width="23" height="22" viewBox="0 0 23 22"><text x="5" y="16" font-size="12.5" fill="#00008a" stroke="#00008a" stroke-width="0.15">割</text></svg></div>
<div class="tb" style="left:554px;top:56px;"><svg width="23" height="22" viewBox="0 0 23 22"><path d="M5 4l13 13M18 4l-13 13" stroke="#903040" stroke-width="0.9" stroke-dasharray="1.5 0.8"/><text x="6.6" y="15.8" font-family="Liberation Serif" font-weight="bold" font-size="12.5" fill="#10008a" stroke="#10008a" stroke-width="0.3">D</text><rect x="10.3" y="9" width="1.6" height="4" fill="#c03050"/></svg></div>
<div class="tb" style="left:577px;top:56px;"><svg width="23" height="22" viewBox="0 0 23 22"><text x="4" y="16.5" font-size="13" fill="#000090">绕</text><path d="M10.5 5.5h4.5l-3.5 7" stroke="#c02040" stroke-width="1.8" fill="none"/></svg></div>
<div class="tb" style="left:600px;top:56px;"><svg width="23" height="22" viewBox="0 0 23 22"><text x="3" y="17" font-size="16" fill="#00008a" stroke="#00008a" stroke-width="0.1">雕</text></svg></div>
<div class="tb" style="left:623px;top:56px;"><svg width="23" height="22" viewBox="0 0 23 22"><rect x="3" y="4" width="7" height="6" fill="#1010c8"/><path d="M4.5 5.5h2M4.5 7.5h2M7.5 6.5h1.5" stroke="#fff" stroke-width="0.8"/><circle cx="13.5" cy="12.5" r="5.3" fill="#f6f060"/><text x="10.3" y="16" font-family="Liberation Sans" font-weight="bold" font-size="9" fill="#000" stroke="#000" stroke-width="0.3">C</text></svg></div>
<div class="tb" style="left:663px;top:56px;"><svg width="23" height="22" viewBox="0 0 23 22"><path d="M4.5 15.5L11 8L17.5 15.5" fill="none" stroke="#a0a0a0" stroke-width="2.6" stroke-linejoin="bevel"/><path d="M7.5 13.3h7M2.5 16h5M14.5 16h5" stroke="#a0a0a0" stroke-width="1.6"/><path d="M3.5 6h4M3.5 6l2-2M3.5 6l2 2M19 6h-4M19 6l-2-2M19 6l-2 2" fill="none" stroke="#a0a0a0" stroke-width="1.2"/></svg></div>
<div class="tb" style="left:686px;top:56px;"><svg width="23" height="22" viewBox="0 0 23 22"><rect x="3.5" y="3.5" width="15" height="14" fill="none" stroke="#a8a8a8" stroke-width="1.1"/><path d="M6.5 15.5l4.5-10 4.5 10M8.5 12h5M5 15.8h3.5M13.5 15.8h3.5" fill="none" stroke="#a0a0a0" stroke-width="1.6"/></svg></div>
<div class="tb" style="left:709px;top:56px;"><svg width="23" height="22" viewBox="0 0 23 22"><path d="M9 6.5h6M6 14.6h5.5M13 6.5l-4.5 8" stroke="#a8a8a8" stroke-width="2"/></svg></div>
<div class="tb" style="left:732px;top:56px;"><svg width="23" height="22" viewBox="0 0 23 22"><rect x="3" y="3.5" width="15" height="14.5" fill="#fff" stroke="#000" stroke-width="1.8"/><path d="M5 5.5h6M5 8h5M5 10.5h5M5 13h5M5 15.5h4" stroke="#000" stroke-width="1.1"/><path d="M16 5l-5 10.5v2l2-1.5 4.5-9z" fill="#000"/><path d="M14.5 8.5l-3 6" stroke="#f0f080" stroke-width="1.2"/></svg></div>
<div class="tb" style="left:763px;top:56px;background:#f8f8f8;border-color:#6a6a6a #fff #fff #6a6a6a;box-shadow:inset 1px 1px 0 #b9b9b9"><svg width="23" height="22" viewBox="0 0 23 22"><path d="M5 6.5h14M5 8.5h14M5 10.5h14M5 12.5h14M5 14.5h14M5 16.5h14" stroke="#7a7a7a" stroke-width="1"/></svg></div>
<div class="tb" style="left:786px;top:56px;"><svg width="23" height="22" viewBox="0 0 23 22"><path d="M4 6.5h14M6 8.5h10M4 10.5h14M6 12.5h10M4 14.5h14M6 16.5h10" stroke="#7a7a7a" stroke-width="1"/></svg></div>
<div class="tb" style="left:809px;top:56px;"><svg width="23" height="22" viewBox="0 0 23 22"><path d="M4 6.5h14M8 8.5h10M4 10.5h14M8 12.5h10M4 14.5h14M8 16.5h10" stroke="#7a7a7a" stroke-width="1"/></svg></div>
<div class="tb" style="left:832px;top:56px;"><svg width="23" height="22" viewBox="0 0 23 22"><path d="M4.5 3.3v14.5M18.5 3.3v14.5" stroke="#7a7a7a" stroke-width="1.2"/><path d="M4.5 9.9h14M4.5 12.7h14M4.5 15.9h14" stroke="#7a7a7a" stroke-width="1.4"/><path d="M5.5 5.5h4M5.5 5.5l2-2M5.5 5.5l2 2M17.5 5.5h-4M17.5 5.5l-2-2M17.5 5.5l-2 2" stroke="#7a7a7a" stroke-width="1.1" fill="none"/></svg></div>
<div class="tb" style="left:7px;top:86px;"><svg width="23" height="22" viewBox="0 0 23 22"><circle cx="10" cy="9.5" r="5.5" fill="#fff" stroke="#000" stroke-width="1.4"/><path d="M14 13.5l4 4" stroke="#000" stroke-width="2.6"/><path d="M7.5 7.5l3.5 4M11 7.5l-3.5 4" stroke="#d03030" stroke-width="1.2"/><path d="M12.5 7h2.5M12.5 9.5h2.5M12.5 12h2.5" stroke="#1010b0" stroke-width="1.4"/></svg></div>
<div class="cb" style="left:40px;top:86px;width:223px"><div class="gt" style="left:3px;top:2px"></div><div class="dd"></div></div>
<div class="cb" style="left:273px;top:86px;width:110px"><div class="gt" style="left:3px;top:2px">文泰98简体</div><div class="dd"></div></div>
<div class="cb" style="left:393px;top:86px;width:109px"><div class="gt" style="left:3px;top:2px">文泰长宋</div><div class="dd"></div></div>
<div class="tb" style="left:513px;top:86px;"><svg width="23" height="22" viewBox="0 0 23 22"><text x="3.8" y="17.3" font-size="15" fill="#fff">型</text><text x="3" y="16.5" font-size="15" fill="#a0a0a0">型</text></svg></div>
<div class="gt" style="left:545px;top:90px">高</div>
<div class="cb" style="left:560px;top:86px;width:94px"><div class="gt" style="left:3px;top:2px">40.0000毫米</div><div class="dd"></div></div>
<div class="gt" style="left:665px;top:90px">宽</div>
<div class="cb" style="left:680px;top:86px;width:94px"><div class="gt" style="left:3px;top:2px">40.0000毫米</div><div class="dd"></div></div>
<div id="menu">
<div class="it" style="top:1px">R重新开始...</div>
<div class="it" style="top:23px">N新建</div>
<div class="sc" style="top:23px">Ctrl+N</div>
<div class="it" style="top:45px">O打开...</div>
<div class="sc" style="top:45px">Ctrl+O</div>
<div class="it" style="top:67px">C关闭</div>
<div class="it" style="top:89px">S存盘</div>
<div class="sc" style="top:89px">Ctrl+S</div>
<div class="it" style="top:111px">A另存为...</div>
<div class="sep" style="top:136px"></div>
<div class="it" style="top:140px">I读入...</div>
<div class="it" style="top:162px">F读入新图库...</div>
<div class="it" style="top:184px">读入3维数据...</div>
<div class="hl" style="top:206px"></div>
<div class="it" style="top:206px">Q存为其他格式...</div>
<div class="sep" style="top:231px"></div>
<div class="it" style="top:235px">D选择扫描设备...</div>
<div class="it" style="top:257px">G图象扫描...</div>
<div class="it" style="top:279px">T图象转换...</div>
<div class="it" style="top:301px">B图象条块化...</div>
<div class="sep" style="top:326px"></div>
<div class="it" style="top:330px">P打印...</div>
<div class="sc" style="top:330px">Ctrl+P</div>
<div class="it" style="top:352px">R色带打印...</div>
<div class="it" style="top:374px">Y打印预览</div>
<div class="it" style="top:396px">E打印设置...</div>
<div class="sep" style="top:421px"></div>
<div class="it" style="top:425px">U刻绘输出...</div>
<div class="sc" style="top:425px">Ctrl+K</div>
<div class="it" style="top:447px">B笔刷条幅输出...</div>
<div class="it" style="top:469px">J机械雕刻输出...</div>
<div class="sc" style="top:469px">Ctrl+G</div>
<div class="it" style="top:491px">Z保存雕刻路径...</div>
<div class="it" style="top:513px">H设置水平分割线</div>
<div class="it" style="top:535px">V设置竖直分割线</div>
<div class="sep" style="top:560px"></div>
<div class="it" style="top:564px;color:#767676;letter-spacing:0.4px">Recent File</div>
<div class="sep" style="top:589px"></div>
<div class="it" style="top:593px">X退出</div>
</div>
<div class="a" style="left:1392px;top:111px;width:33px;height:621px;background:#f0f0f2"></div><div class="a" style="left:1392px;top:111px;width:32px;height:1px;background:#9a9a9a"></div><div class="a" style="left:1392px;top:112px;width:32px;height:1px;background:#fff"></div><div class="a" style="left:1392px;top:483px;width:32px;height:1px;background:#9a9a9a"></div><div class="a" style="left:1392px;top:484px;width:32px;height:1px;background:#fff"></div>
<div class="tb" style="left:1397px;top:118px;width:23px;height:21px"><svg width="23" height="22" viewBox="0 0 23 22"><path d="M8 4v13l3-3 2.5 5 2-1-2.5-5h4z" fill="#000"/></svg></div>
<div class="tb" style="left:1397px;top:139px;width:23px;height:22px"><svg width="23" height="22" viewBox="0 0 23 22"><path d="M4.6 5.2H17.2L16.6 9L15.2 7.6H12.6L10.6 15.4H13.2L12.6 17.8H3.4L4 15.4H6.6L8.6 7.6H6.2L4 9.2z" fill="#000"/></svg></div>
<div class="tb" style="left:1397px;top:168px;width:23px;height:21px"><svg width="23" height="22" viewBox="0 0 23 22"><rect x="4" y="2.5" width="14" height="3" fill="#10106a"/><rect x="12" y="3.2" width="5" height="1.4" fill="#fff"/><path d="M5.5 5.5v11" stroke="#000" stroke-width="1.6"/><path d="M8 17c0-5 2.5-8.5 5.5-8.5" stroke="#000" stroke-width="1.3" fill="none"/><path d="M11.5 8.5l6.5 4.5-3 .8 1.8 3-1.5 .8-1.8-3-2 2.2z" fill="#000"/></svg></div>
<div class="tb" style="left:1397px;top:189px;width:23px;height:21px"><svg width="23" height="22" viewBox="0 0 23 22"><path d="M4 4.2h2.7v12h-2.7z M7.6 4.2h10v2.8h-10z M15 4.2h2.6v12h-2.6z M7.6 13.4h10v2.8h-10z" fill="#d41c1c"/></svg></div>
<div class="tb" style="left:1397px;top:217px;width:23px;height:21px"><svg width="23" height="22" viewBox="0 0 23 22"><path d="M8 12c1-4 3-7 7-8M15 4c0 3 0 6-1 8" stroke="#2a8a2a" stroke-width="1.3" fill="none"/><circle cx="7.5" cy="14.5" r="3.6" fill="#d41818"/><circle cx="14" cy="15" r="3.6" fill="#d41818"/><circle cx="6.5" cy="13.5" r="1" fill="#fff"/><circle cx="13" cy="14" r="1" fill="#fff"/></svg></div>
<div class="tb" style="left:1397px;top:238px;width:23px;height:21px"><svg width="23" height="22" viewBox="0 0 23 22"><path d="M7 12c1-4 3-7 6-9M13 3c1 3 2 6 1 9M16 3l2 9" stroke="#1a40a0" stroke-width="1.3" fill="none"/><path d="M9 5c2 1 3 4 3 7" stroke="#2a8a2a" stroke-width="1.2" fill="none"/><circle cx="7" cy="14.5" r="3.6" fill="#d41818"/><circle cx="13.5" cy="15" r="3.6" fill="#d41818"/></svg></div>
<div class="tb" style="left:1397px;top:259px;width:23px;height:22px"><svg width="23" height="22" viewBox="0 0 23 22"><circle cx="9" cy="9" r="4.5" fill="#fff" stroke="#000" stroke-width="1.3"/><path d="M10 11l7-1 1 7-8 0z" fill="#80e0e0" stroke="#000" stroke-width="1.2"/></svg></div>
<div class="tb" style="left:1397px;top:281px;width:23px;height:21px"><svg width="23" height="22" viewBox="0 0 23 22"><rect x="3.5" y="5" width="16" height="12" fill="#101070"/><path d="M4.5 9h14M4.5 12h14M4.5 15h14M9 8v8M14 8v8" stroke="#fff" stroke-width="1"/></svg></div>
<div class="tb" style="left:1397px;top:310px;width:23px;height:20px"><svg width="23" height="22" viewBox="0 0 23 22"><rect x="5" y="4.5" width="5.5" height="5" fill="#d81818"/><rect x="12.5" y="4.5" width="5.5" height="5" fill="#20d020"/><rect x="5" y="11.5" width="5.5" height="5" fill="#1010a0"/><rect x="12.5" y="11.5" width="5.5" height="5" fill="#000"/></svg></div>
<div class="tb" style="left:1397px;top:330px;width:23px;height:22px"><svg width="23" height="22" viewBox="0 0 23 22"><path d="M9 4.5l9.5 5-5.5 8-7-4.5z" fill="#103c40" stroke="#000" stroke-width="1.3"/><path d="M9.5 5l8.5 4.5" stroke="#60c0c0" stroke-width="1.5"/><path d="M8 6.5c-3 1-4.5 4-3.5 8 .8 2 2 2 2.2 .2" stroke="#000" stroke-width="2" fill="none"/></svg></div>
<div class="tb" style="left:1397px;top:358px;width:23px;height:21px"><svg width="23" height="22" viewBox="0 0 23 22"><path d="M6 5.5h11M6 8.5h10M6 11.5h10M6 14.5h10" stroke="#000" stroke-width="1.5"/><path d="M13 4.5h4v2h-4z" fill="#000"/></svg></div>
<div class="tb" style="left:1397px;top:386px;width:23px;height:21px"><svg width="23" height="22" viewBox="0 0 23 22"><rect x="9" y="5" width="6" height="13" fill="#fff" stroke="#000" stroke-width="1.3"/><rect x="9" y="10" width="6" height="8" fill="#000"/><path d="M6 4l6 4" stroke="#888" stroke-width="2"/></svg></div>
<div class="tb" style="left:1397px;top:412px;width:23px;height:22px"><svg width="23" height="22" viewBox="0 0 23 22"><rect x="5" y="5" width="9" height="7" fill="#c8c8c8" stroke="#a0a0a0"/><circle cx="14" cy="13" r="3.5" fill="#d8d8d8" stroke="#a0a0a0"/><path d="M6 15h6" stroke="#b0b0b0" stroke-width="2"/></svg></div>
<div class="tb" style="left:1397px;top:434px;width:23px;height:21px"><svg width="23" height="22" viewBox="0 0 23 22"><rect x="5" y="4.5" width="11" height="9" fill="#f0e060" stroke="#000" stroke-width="1.1"/><circle cx="14" cy="14" r="4" fill="none" stroke="#e07020" stroke-width="1.3"/><path d="M5 15h6l-2-2M11 15l-2 2" stroke="#000" stroke-width="1.2" fill="none"/></svg></div>
<div class="tb" style="left:1397px;top:455px;width:23px;height:22px"><svg width="23" height="22" viewBox="0 0 23 22"><text x="3" y="16" font-family="Liberation Sans" font-size="12" fill="#1a1a70">A</text><path d="M11.5 4v14" stroke="#1a1a70" stroke-width="1.2"/><text x="12" y="16" font-family="Liberation Sans" font-size="11" fill="#d42020">B</text></svg></div>

<div class="a" style="left:1px;top:732px;width:1424px;height:19px;background:#f0f0f0"></div>
<div class="a" style="left:3px;top:734px;font-size:12px;line-height:16px;white-space:nowrap">将当前页的内容存为其他文件格式</div>
<div class="a" style="left:889px;top:734px;width:106px;height:17px;border-top:1px solid #a0a0a0;border-left:1px solid #a0a0a0;overflow:hidden;white-space:nowrap;font-size:12px;line-height:16px;padding-left:2px;letter-spacing:0.35px">X=-212.5105,Y=-2</div>
<div class="a" style="left:997px;top:734px;width:126px;height:17px;border-top:1px solid #a0a0a0;border-left:1px solid #a0a0a0;overflow:hidden;white-space:nowrap;font-size:12px;line-height:16px;padding-left:2px;letter-spacing:0.35px">宽=126.2804,高=79.81</div>
<div class="a" style="left:1125px;top:734px;width:186px;height:17px;border-top:1px solid #a0a0a0;border-left:1px solid #a0a0a0"></div>
<div class="a" style="left:1313px;top:734px;width:31px;height:17px;border-top:1px solid #a0a0a0;border-left:1px solid #a0a0a0"></div>
<div class="a" style="left:1345px;top:734px;width:31px;height:17px;border-top:1px solid #a0a0a0;border-left:1px solid #a0a0a0;font-size:12px;line-height:16px;padding-left:1px">数字</div>
<div class="a" style="left:1377px;top:734px;width:33px;height:17px;border-top:1px solid #a0a0a0;border-left:1px solid #a0a0a0"></div>
<svg style="left:0;top:0" width="1426" height="752"><path d="M1411 750l13-13M1415 750l9-9M1419 750l5-5" stroke="#a0a0a0" stroke-width="1"/>
<g font-family="Liberation Sans" font-weight="900" fill="none" stroke="rgba(150,150,150,0.42)" stroke-width="0.9" style="-webkit-text-stroke:0">
<text x="1289" y="734" font-size="47" letter-spacing="-3">下载吧</text>
<text x="1316" y="751" font-size="12" font-weight="normal" letter-spacing="0.5" stroke="rgba(150,150,150,0.35)">www.xiazaiba.com</text>
</g></svg>


<div class="a" style="left:0;top:0;width:1426px;height:752px;border:1px solid #3478b8;border-top-color:#2e6088;border-bottom-color:#41728f;border-right-color:#3a6f95"></div>
<div class="a" style="left:1px;top:750px;width:1424px;height:1px;background:#d8f4fc"></div>
<div class="a" style="left:1px;top:1px;width:1424px;height:1px;background:#e6f8fd"></div>
<div class="a" style="left:1px;top:52px;width:1px;height:699px;background:#d8f0fa"></div>
<div class="a" style="left:1424px;top:52px;width:1px;height:699px;background:#d8f0fa"></div>


<svg style="left:0;top:0" width="1426" height="752" viewBox="0 0 1426 752">
 <defs><filter id="sh" x="-20%" y="-20%" width="140%" height="140%"><feGaussianBlur in="SourceAlpha" stdDeviation="1.2"/><feOffset dx="1" dy="1.5"/><feComponentTransfer><feFuncA type="linear" slope="0.45"/></feComponentTransfer><feMerge><feMergeNode/><feMergeNode in="SourceGraphic"/></feMerge></filter></defs>
 <g filter="url(#sh)">
  <rect x="41" y="248" width="123" height="40" fill="none" stroke="#d81e1e" stroke-width="3.6"/>
  <path d="M246 391L150 313" stroke="#d81e1e" stroke-width="3.8" stroke-linecap="round"/>
  <path d="M131.5 300.5L156 309.5L144.5 320.5z" fill="#d81e1e" stroke="#d81e1e" stroke-width="1.5" stroke-linejoin="round"/>
 </g>
 <path d="M130.5 266.5V281.5L133.8 278.3L136.8 284.2L139.4 283L136.6 277.2H141.8z" fill="#fff" stroke="#000" stroke-width="1.1" stroke-linejoin="round"/>
</svg>

</body></html>
